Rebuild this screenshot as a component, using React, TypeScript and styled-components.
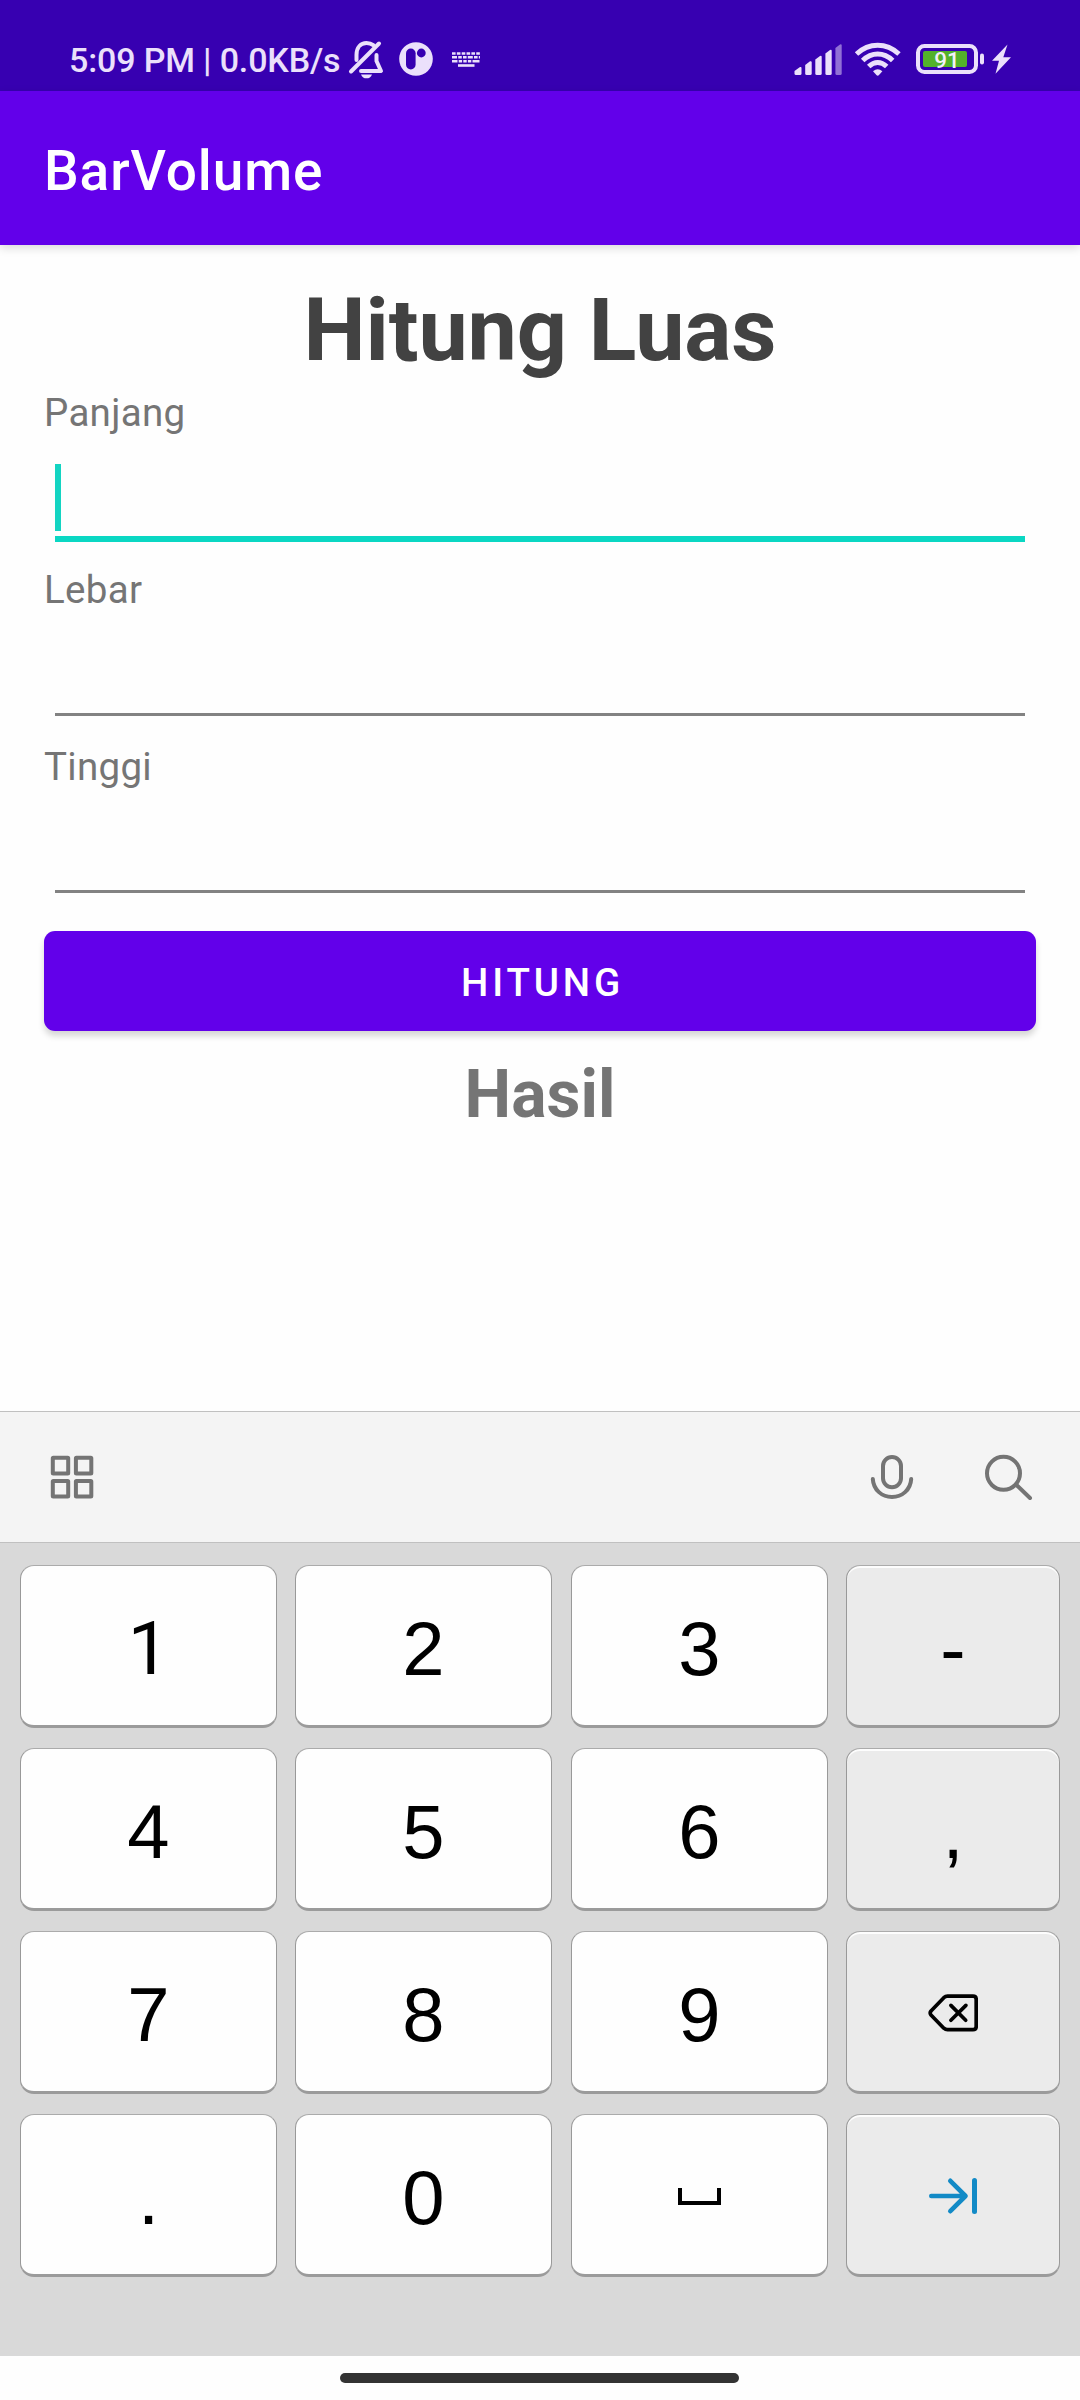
import React from "react";
import styled, { createGlobalStyle } from "styled-components";

const GlobalStyle = createGlobalStyle`
  * { box-sizing: border-box; }
  html, body { margin: 0; padding: 0; background: #fefefe; }
`;

const Screen = styled.div`
  width: 1080px;
  height: 2400px;
  display: flex;
  flex-direction: column;
  overflow: hidden;
  background: #fefefe;
  font-family: Roboto, "Liberation Sans", sans-serif;
`;

const StatusBar = styled.header`
  flex: none;
  height: 91px;
  padding: 28px 68px 0 69px;
  display: flex;
  justify-content: space-between;
  align-items: flex-start;
  background: #3700b1;
  color: #ebe0fb;
`;

const StatusGroup = styled.div`
  height: 64px;
  display: flex;
  align-items: center;
`;

const Clock = styled.span`
  width: 280px;
  font-size: 34px;
  line-height: 64px;
  font-weight: 500;
  letter-spacing: -0.15px;
  white-space: nowrap;
`;

const StatusIcon = styled.svg<{ $gap?: number }>`
  display: block;
  margin-left: ${(p) => p.$gap ?? 0}px;
`;

const AppBar = styled.div`
  flex: none;
  position: relative;
  height: 154px;
  padding: 0 44px;
  display: flex;
  align-items: center;
  background: #6200ea;
  box-shadow: 0 3px 9px rgba(0, 0, 0, 0.14);
`;

const AppTitle = styled.span`
  color: #fff;
  font-size: 55px;
  line-height: 64px;
  font-weight: 500;
  letter-spacing: 0.9px;
  padding-top: 6px;
`;

const Content = styled.main`
  flex: 1;
  padding: 33px 44px 0;
  display: flex;
  flex-direction: column;
`;

const Heading = styled.h1`
  margin: 0 0 5px;
  font-size: 88px;
  line-height: 104px;
  font-weight: 700;
  letter-spacing: -0.12px;
  text-align: center;
  color: #424242;
`;

const Field = styled.div`
  height: 177px;
  display: flex;
  flex-direction: column;
`;

const Label = styled.label`
  font-size: 38.5px;
  line-height: 52px;
  letter-spacing: 0.3px;
  color: #757575;
`;

const Entry = styled.div<{ $focused: boolean }>`
  height: ${(p) => (p.$focused ? 103 : 100)}px;
  margin: 0 11px;
  padding-top: 25px;
  border-bottom: ${(p) => (p.$focused ? "6px solid #0ad7c3" : "3px solid #828282")};
`;

const Caret = styled.div`
  width: 6px;
  height: 67px;
  background: #13d4c2;
`;

const SubmitButton = styled.button`
  height: 100px;
  margin-top: 13px;
  padding: 3px 0 0 5px;
  border: 0;
  border-radius: 11px;
  background: #6200ea;
  color: #fff;
  font: 500 38.5px/52px Roboto, sans-serif;
  letter-spacing: 3.85px;
  box-shadow: 0 5px 6px rgba(0, 0, 0, 0.16);
`;

const Result = styled.div`
  margin-top: 25px;
  font-size: 66px;
  line-height: 78px;
  font-weight: 700;
  text-align: center;
  color: #757575;
`;

const KeyboardBar = styled.div`
  flex: none;
  height: 132px;
  padding: 0 46px 0 48px;
  display: flex;
  align-items: center;
  background: #f4f4f4;
  border-top: 1px solid #c0c0c0;
  border-bottom: 1px solid #c0c0c0;
`;

const BarIcon = styled.svg<{ $left?: string }>`
  display: block;
  flex: none;
  margin-left: ${(p) => p.$left ?? "0"};
  fill: none;
  stroke: #747474;
`;

const Keys = styled.div`
  flex: none;
  height: 813px;
  padding: 22px 20px 0;
  display: grid;
  grid-template-columns: 257px 258px 257px 214px;
  grid-auto-rows: 163px;
  gap: 20px 18px;
  background: #d9d9d9;
`;

const Key = styled.div<{ $side: boolean; $wide: boolean; $plain: boolean }>`
  width: ${(p) => (p.$wide ? "257px" : "auto")};
  display: flex;
  align-items: center;
  justify-content: center;
  border: 1px solid #999;
  border-top-color: #ababab;
  border-bottom: 3px solid #9b9b9b;
  border-radius: 14px;
  background: ${(p) => (p.$side ? "#ebebeb" : "#fefefe")};
  box-shadow: ${(p) => (p.$side ? "inset 0 2px 0 #fdfdfd" : "none")};
  color: #000;
  font-family: ${(p) => (p.$plain ? "Roboto, sans-serif" : '"Liberation Sans", Arial, sans-serif')};
  font-size: ${(p) => (p.$plain ? 74 : 76)}px;
  line-height: 84px;
  padding-top: 6px;
`;

const KeyIcon = styled.svg`
  display: block;
  fill: none;
  stroke-linecap: round;
  stroke-linejoin: round;
  margin-top: -3px;
`;

const NavBar = styled.footer`
  flex: none;
  height: 44px;
  display: flex;
  justify-content: center;
  align-items: flex-start;
  padding: 17px 1px 0 0;
  background: #fefefe;
`;

const NavPill = styled.div`
  width: 399px;
  height: 10px;
  border-radius: 5px;
  background: #333;
`;

const MutedBell = () => (
  <StatusIcon width="36" height="40" viewBox="348 40 36 40" $gap={-1}
    fill="none" stroke="#ebe0fb" strokeWidth="4" strokeLinecap="round" strokeLinejoin="round">
    <path d="M356.500 60V55C356.500 47 361 43 366.500 43C369.300 43 371.500 43.800 373.300 45.200" />
    <path d="M376.500 55V61L381 71H361" />
    <path d="M379 43.500L351 71.500" />
    <path d="M361 74.500H372C371 77.500 369 78.300 366.500 78.300S362 77.500 361 74.500Z" fill="#ebe0fb" stroke="none" />
  </StatusIcon>
);

const AppBadge = () => (
  <StatusIcon width="34" height="36" viewBox="399 42 34 36" $gap={15}>
    <circle cx="416" cy="59" r="16.800" fill="#ebe0fb" />
    <rect x="406" y="48.500" width="9.600" height="21" rx="4.800" fill="#3700b1" />
    <circle cx="421.300" cy="53" r="4.400" fill="#3700b1" />
  </StatusIcon>
);

const KeyboardGlyph = () => (
  <StatusIcon width="28" height="16" viewBox="452 52 28 16" $gap={19} stroke="#ebe0fb" fill="none">
    <path d="M452 53.500H480" strokeWidth="2.600" strokeDasharray="3.600 1.250" />
    <path d="M452 57.300H480" strokeWidth="2.400" strokeDasharray="5 1.200 3.600 1.200 3.600 1.200" />
    <path d="M452 61.300H480" strokeWidth="2.600" strokeDasharray="5.500 1.200 3.400 1.200 3.400 1.200 3.400 1.200 7 1" />
    <path d="M458 65.500H474.500" strokeWidth="2.600" />
  </StatusIcon>
);

const Signal = () => (
  <StatusIcon width="49" height="32" viewBox="794 44 49 32" fill="#ebe0fb">
    <path d="M794.500 71L800 67Q801.500 66.500 801.500 68V73.500Q801.500 75 800 75H796Q794.500 75 794.500 73.500Z" />
    <path d="M805.200 65L810 61.300Q811.700 60.700 811.700 62.500V73.500Q811.700 75 810.200 75H806.700Q805.200 75 805.200 73.500Z" />
    <path d="M815.300 59.500L820 56Q821.700 55.400 821.700 57V73.500Q821.700 75 820.200 75H816.800Q815.300 75 815.300 73.500Z" />
    <path d="M825.400 53.500L830 50Q831.700 49.400 831.700 51V73.500Q831.700 75 830.200 75H826.900Q825.400 75 825.400 73.500Z" />
    <path opacity="0.5" d="M835.400 48L840 44.500Q841.700 43.900 841.700 45.500V73.500Q841.700 75 840.200 75H836.900Q835.400 75 835.400 73.500Z" />
  </StatusIcon>
);

const Wifi = () => (
  <StatusIcon width="48" height="36" viewBox="854 42 48 36" $gap={11} fill="none" stroke="#ebe0fb" strokeWidth="5">
    <path d="M856.500 54Q866 45.300 877.700 45.300T899 54" />
    <path d="M862.700 60.500Q869.500 54 877.700 54T892.700 60.500" />
    <path d="M868.700 66.500Q873 62.500 877.700 62.500T886.700 66.500" />
    <path d="M873 71.300Q877.700 67.300 882.400 71.300L879 75Q877.700 76.300 876.400 75Z" fill="#ebe0fb" stroke="none" />
  </StatusIcon>
);

const Battery = () => (
  <StatusIcon width="96" height="32" viewBox="916 44 96 32" $gap={14}>
    <rect x="918" y="46" width="58" height="26" rx="6.500" fill="none" stroke="#ebe0fb" strokeWidth="4" />
    <rect x="923" y="51" width="44" height="16" rx="2" fill="#53b12b" />
    <rect x="980" y="53.500" width="4" height="11" rx="2" fill="#ebe0fb" />
    <text x="947" y="67.500" textAnchor="middle" fontFamily="Roboto, sans-serif" fontSize="22.500" fontWeight="500" fill="#f3effa">91</text>
    <path d="M1007.500 44.500L992 60.700H999L995.500 73.800L1011 57.300H1003.300Z" fill="#ebe0fb" />
  </StatusIcon>
);

const BackspaceIcon = () => (
  <KeyIcon width="50" height="38" viewBox="928 1994 50 38" stroke="#000" strokeWidth="3.700">
    <path d="M947.500 1996.200H973Q976.200 1996.200 976.200 1999.500V2026.500Q976.200 2029.700 973 2029.700H947.500Q945.500 2029.700 943.800 2028.200L931 2015Q929.400 2013 931 2011L943.800 1997.700Q945.500 1996.200 947.500 1996.200Z" />
    <path d="M950.900 2005.400L965.700 2020.200M965.900 2005.400L950.900 2020.200" />
  </KeyIcon>
);

const TabIcon = () => (
  <KeyIcon width="50" height="38" viewBox="928 2177.500 50 38" stroke="#128ac6">
    <path d="M931.300 2196.500H965M950.300 2181.300L965.500 2196.500L950.300 2211.700" strokeWidth="4.600" />
    <path d="M974.500 2181V2212" strokeWidth="5" />
  </KeyIcon>
);

const SpaceIcon = () => (
  <KeyIcon width="43" height="17" viewBox="678 2187 43 17">
    <path d="M680 2187V2202H719V2187" stroke="#000" strokeWidth="4" strokeLinecap="butt" strokeLinejoin="miter" />
  </KeyIcon>
);

const fields = ["Panjang", "Lebar", "Tinggi"];

const keys: React.ReactNode[] = [
  "1", "2", "3", "-",
  "4", "5", "6", ",",
  "7", "8", "9", <BackspaceIcon />,
  ".", "0", <SpaceIcon />, <TabIcon />,
];

export default function App() {
  return (
    <>
      <GlobalStyle />
      <Screen>
        <StatusBar>
          <StatusGroup>
            <Clock>5:09 PM | 0.0KB/s</Clock>
            <MutedBell />
            <AppBadge />
            <KeyboardGlyph />
          </StatusGroup>
          <StatusGroup>
            <Signal />
            <Wifi />
            <Battery />
          </StatusGroup>
        </StatusBar>
        <AppBar>
          <AppTitle>BarVolume</AppTitle>
        </AppBar>
        <Content>
          <Heading>Hitung Luas</Heading>
          {fields.map((name, i) => (
            <Field key={name}>
              <Label>{name}</Label>
              <Entry $focused={i === 0}>{i === 0 && <Caret />}</Entry>
            </Field>
          ))}
          <SubmitButton>HITUNG</SubmitButton>
          <Result>Hasil</Result>
        </Content>
        <KeyboardBar>
          <BarIcon width="48" height="48" viewBox="48 1453 48 48" strokeWidth="4">
            <rect x="52.800" y="1457.800" width="15.400" height="15.600" rx="0.500" />
            <rect x="75.900" y="1457.800" width="15.400" height="15.600" rx="0.500" />
            <rect x="52.800" y="1480.900" width="15.400" height="15.600" rx="0.500" />
            <rect x="75.900" y="1480.900" width="15.400" height="15.600" rx="0.500" />
          </BarIcon>
          <BarIcon $left="auto" width="48" height="48" viewBox="868 1453 48 48" strokeWidth="4" strokeLinecap="round">
            <rect x="883" y="1457" width="18" height="30.300" rx="9" />
            <path d="M872.800 1479C873.500 1490 882 1497 892 1497S910.500 1490 911.200 1479" />
          </BarIcon>
          <BarIcon $left="68px" width="50" height="48" viewBox="984 1453 50 48" strokeWidth="4" strokeLinecap="round">
            <circle cx="1003.500" cy="1473.300" r="16.500" />
            <path d="M1016.500 1485L1030 1498" />
          </BarIcon>
        </KeyboardBar>
        <Keys>
          {keys.map((k, i) => (
            <Key key={i} $side={i % 4 === 3} $wide={i % 4 === 1} $plain={k === "1"}>
              {k}
            </Key>
          ))}
        </Keys>
        <NavBar>
          <NavPill />
        </NavBar>
      </Screen>
    </>
  );
}
